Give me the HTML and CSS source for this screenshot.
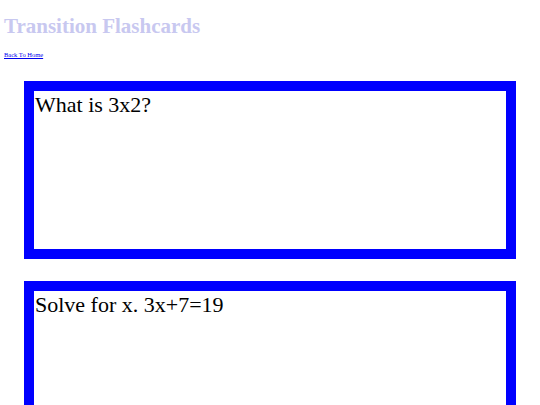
FILE: index.html
```html
<!DOCTYPE html>
<html>
<head>
<meta charset="utf-8">
<link rel="stylesheet" href="styles.css">
</head>
<body>
<h1 class="title">Transition Flashcards</h1>
<a class="home" href="#">Back To Home</a>
<div class="deck">
  <div class="card">What is 3x2?</div>
  <div class="card">Solve for x. 3x+7=19</div>
</div>
</body>
</html>
```

FILE: styles.css
```css
body {
  margin: 0;
  padding: 0 4px;
  font-family: "Liberation Serif", "Times New Roman", serif;
}
.title {
  margin: 15px 0 0;
  font-size: 21px;
  line-height: 23px;
  font-weight: bold;
  color: #c8c8f0;
}
.home {
  display: inline-block;
  margin-top: 13px;
  font-size: 6.5px;
  color: #0000ee;
}
.deck {
  display: flex;
  flex-direction: column;
  gap: 22px;
  margin: 20px 20px 0;
}
.card {
  height: 158px;
  border: 10px solid #0000ff;
  padding-left: 1px;
  font-size: 22px;
  line-height: 28px;
  color: #000;
  background: #fff;
}
```
